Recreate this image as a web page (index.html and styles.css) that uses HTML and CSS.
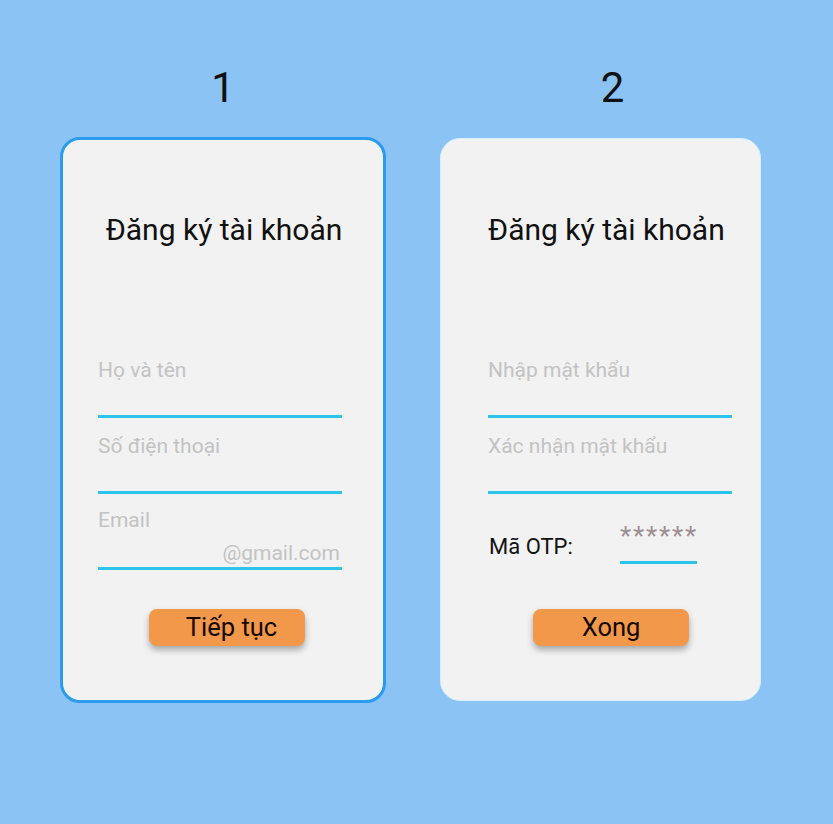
FILE: index.html
```html
<!DOCTYPE html>
<html lang="vi">
<head>
<meta charset="utf-8">
<title>Đăng ký tài khoản</title>
<link rel="stylesheet" href="styles.css">
</head>
<body>
<div class="page">
  <section class="col col-1">
    <div class="num">1</div>
    <div class="card card-1">
      <h1 class="title title-1">Đăng ký tài khoản</h1>
      <div class="fields">
        <div class="field"><span class="ph">Họ và tên</span></div>
        <div class="field"><span class="ph">Số điện thoại</span></div>
        <div class="field field-email"><span class="ph">Email</span><span class="ph suffix">@gmail.com</span></div>
      </div>
      <button class="btn btn-1">Tiếp tục</button>
    </div>
  </section>
  <section class="col col-2">
    <div class="num num-2">2</div>
    <div class="card card-2">
      <h1 class="title title-2">Đăng ký tài khoản</h1>
      <div class="fields">
        <div class="field"><span class="ph">Nhập mật khẩu</span></div>
        <div class="field"><span class="ph">Xác nhận mật khẩu</span></div>
      </div>
      <div class="otp-row">
        <span class="otp-label">Mã OTP:</span>
        <span class="otp-box">******</span>
      </div>
      <button class="btn btn-2">Xong</button>
    </div>
  </section>
</div>
</body>
</html>
```
FILE: styles.css
```css
* { box-sizing: border-box; }
html, body { margin: 0; padding: 0; }
body {
  background: #8bc3f5;
  font-family: Roboto, "Noto Sans", "Liberation Sans", sans-serif;
  width: 833px;
  height: 824px;
  overflow: hidden;
}
.page {
  display: flex;
  gap: 54px;
  padding: 64px 0 0 60px;
}
.col { display: flex; flex-direction: column; }
.col-1 { width: 326px; }
.col-2 { width: 321px; }
.num {
  font-size: 42px;
  line-height: 48px;
  height: 48px;
  text-align: center;
  color: #111;
  margin-bottom: 25px;
}
.num-2 { padding-left: 24px; }
.card {
  background: #f2f2f2;
  border-radius: 20px;
}
.card-1 {
  height: 566px;
  border: 3px solid #2a9ceb;
  padding: 73px 0 0 35px;
}
.card-2 {
  height: 563px;
  margin-top: 1px;
  border: 1px solid #d6f1fb;
  padding: 74px 0 0 47px;
}
.title {
  margin: 0 0 112px;
  font-size: 30px;
  line-height: 34px;
  font-weight: 400;
  color: #111;
  text-align: center;
  white-space: nowrap;
}
.title-1 { width: 252px; }
.title-2 { width: 236px; }
.fields { display: flex; flex-direction: column; gap: 17px; width: 244px; }
.field {
  height: 59px;
  border-bottom: 3px solid #2bc4ea;
  display: flex;
  flex-direction: column;
  justify-content: space-between;
}
.ph {
  font-size: 21px;
  line-height: 22px;
  color: #c3c3c3;
}
.field-email .ph:first-child { margin-top: -2px; }
.suffix { align-self: flex-end; margin-right: 2px; margin-bottom: 3px; }
.btn {
  display: block;
  width: 156px;
  height: 37px;
  border: none;
  border-radius: 8px;
  background: #f2984a;
  box-shadow: 0 4px 6px rgba(60, 60, 60, 0.4);
  font-family: Roboto, "Noto Sans", sans-serif;
  font-size: 25.5px;
  line-height: 35px;
  padding: 0;
  color: #140800;
  text-align: center;
}
.btn-1 { margin: 39px 0 0 51px; padding-left: 9px; }
.btn-2 { margin: 45px 0 0 45px; }
.otp-row {
  display: flex;
  align-items: flex-start;
  margin-top: 17px;
}
.otp-label {
  margin-top: 24px;
  font-size: 22px;
  line-height: 24px;
  color: #111;
  width: 132px;
  padding-left: 1px;
}
.otp-box {
  margin-top: 13px;
  width: 77px;
  font-size: 26px;
  line-height: 24px;
  letter-spacing: 1.8px;
  padding-bottom: 13px;
  color: #9d8e91;
  border-bottom: 3px solid #2bc4ea;
  text-align: right;
  white-space: nowrap;
}
```
